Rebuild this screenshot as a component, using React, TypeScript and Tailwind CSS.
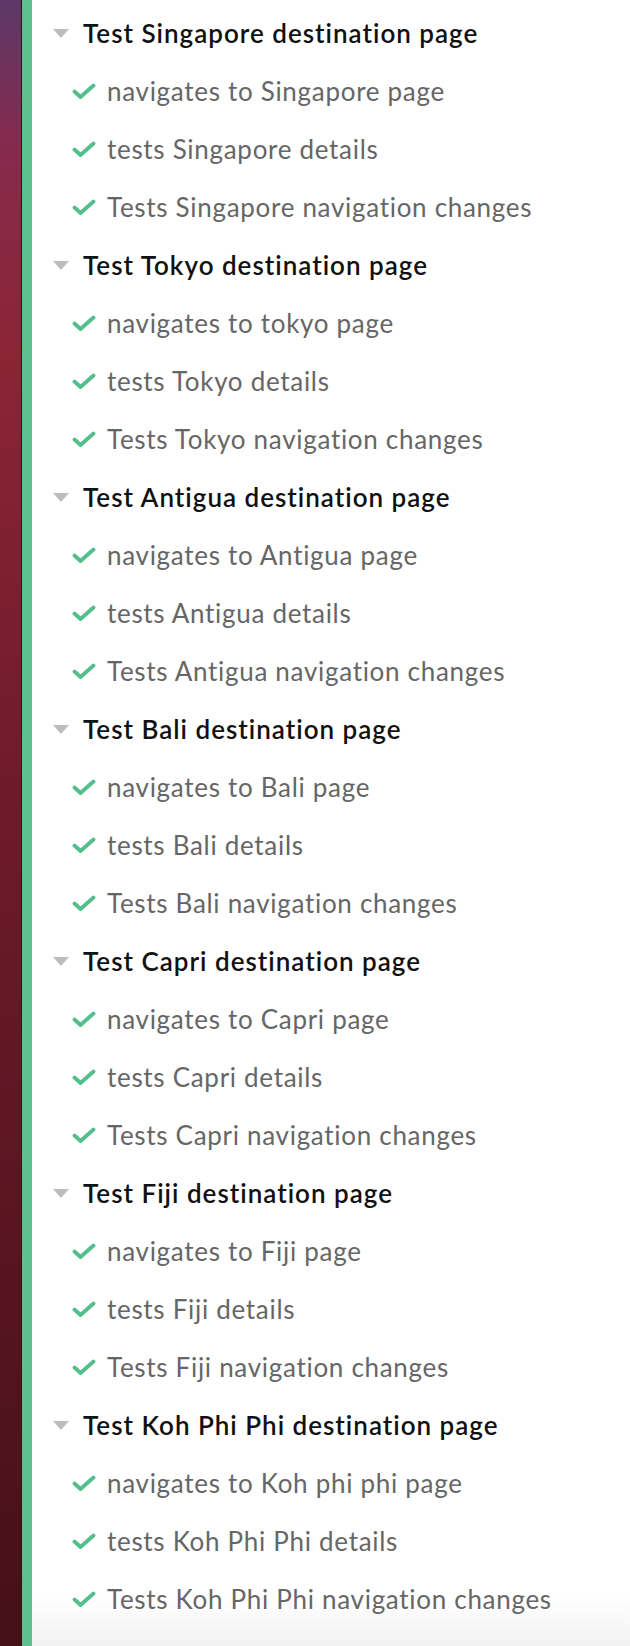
import React from "react";

type Suite = {
  title: string;
  tests: string[];
};

const suites: Suite[] = [
  {
    title: "Test Singapore destination page",
    tests: ["navigates to Singapore page", "tests Singapore details", "Tests Singapore navigation changes"],
  },
  {
    title: "Test Tokyo destination page",
    tests: ["navigates to tokyo page", "tests Tokyo details", "Tests Tokyo navigation changes"],
  },
  {
    title: "Test Antigua destination page",
    tests: ["navigates to Antigua page", "tests Antigua details", "Tests Antigua navigation changes"],
  },
  {
    title: "Test Bali destination page",
    tests: ["navigates to Bali page", "tests Bali details", "Tests Bali navigation changes"],
  },
  {
    title: "Test Capri destination page",
    tests: ["navigates to Capri page", "tests Capri details", "Tests Capri navigation changes"],
  },
  {
    title: "Test Fiji destination page",
    tests: ["navigates to Fiji page", "tests Fiji details", "Tests Fiji navigation changes"],
  },
  {
    title: "Test Koh Phi Phi destination page",
    tests: ["navigates to Koh phi phi page", "tests Koh Phi Phi details", "Tests Koh Phi Phi navigation changes"],
  },
];

const Check = () => (
  <svg width="24" height="16" viewBox="0 0 24 16" className="shrink-0">
    <path d="M2.5 8.5 L8.5 14 L21.5 2.5" fill="none" stroke="#52bf8c" strokeWidth="3.8" strokeLinecap="round" strokeLinejoin="round" />
  </svg>
);

const Caret = () => (
  <svg width="16" height="9" viewBox="0 0 16 9" className="shrink-0">
    <path d="M0 0 H16 L8 9 Z" fill="#bdbdbd" />
  </svg>
);

const SuiteBlock = ({ suite }: { suite: Suite }) => {
  return (
    <div>
      <div className="h-[58px] flex items-center pl-[21px]">
        <Caret />
        <span className="ml-[14px] text-[26px] leading-none font-semibold tracking-[1px] text-[#111]">
          {suite.title}
        </span>
      </div>
      {suite.tests.map((t) => (
        <div key={t} className="h-[58px] flex items-center pl-[40px]">
          <Check />
          <span className="ml-[11px] text-[26px] leading-none tracking-[0.7px] text-[#666]">{t}</span>
        </div>
      ))}
    </div>
  );
};

export default function App() {
  return (
    <div
      className="flex w-[630px] h-[1646px] overflow-hidden"
      style={{ fontFamily: "Lato, 'Open Sans', sans-serif" }}
    >
      <div className="w-[21px] shrink-0 bg-[linear-gradient(to_bottom,#5d3868_0px,#862a4c_150px,#8b2536_350px,#6e1a2a_800px,#451018_1646px)]" />
      <div className="w-[1px] shrink-0 bg-[#1c1c1c]" />
      <div className="w-[10px] shrink-0 bg-[#5dc08f]" />
      <div className="flex-1 bg-gradient-to-b from-white from-[97%] to-[#f2f2f2] pt-[4px]">
        {suites.map((s) => (
          <SuiteBlock key={s.title} suite={s} />
        ))}
      </div>
    </div>
  );
}
